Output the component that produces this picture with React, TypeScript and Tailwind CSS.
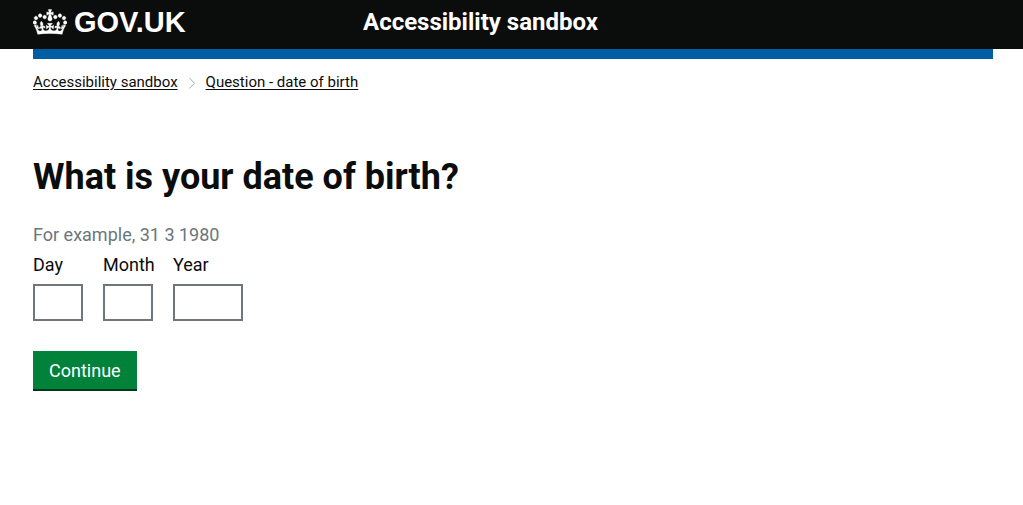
const crown =
  'M25 30.2c3.5 1.5 7.7-.2 9.1-3.7 1.5-3.6-.2-7.8-3.9-9.2-3.6-1.4-7.6.3-9.1 3.9-1.4 3.5.3 7.5 3.9 9zM9 39.5c3.6 1.5 7.8-.2 9.2-3.7 1.5-3.6-.2-7.8-3.9-9.1-3.6-1.5-7.6.2-9.1 3.8-1.4 3.5.3 7.5 3.8 9zM4.4 57.2c3.5 1.5 7.7-.2 9.1-3.8 1.5-3.6-.2-7.7-3.9-9.1-3.5-1.5-7.6.3-9.1 3.8-1.4 3.5.3 7.6 3.9 9.1zm38.3-21.4c3.5 1.5 7.7-.2 9.1-3.8 1.5-3.6-.2-7.7-3.9-9.1-3.6-1.5-7.6.3-9.1 3.8-1.3 3.6.4 7.7 3.9 9.1zm64.4-5.6c-3.6 1.5-7.8-.2-9.1-3.7-1.5-3.6.2-7.8 3.8-9.2 3.6-1.4 7.7.3 9.2 3.9 1.3 3.5-.4 7.5-3.9 9zm15.9 9.3c-3.6 1.5-7.7-.2-9.1-3.7-1.5-3.6.2-7.8 3.7-9.1 3.6-1.5 7.7.2 9.2 3.8 1.5 3.5-.3 7.5-3.8 9zm4.7 17.7c-3.6 1.5-7.8-.2-9.2-3.8-1.5-3.6.2-7.7 3.9-9.1 3.6-1.5 7.7.3 9.2 3.8 1.3 3.5-.4 7.6-3.9 9.1zM89.3 35.8c-3.6 1.5-7.8-.2-9.2-3.8-1.4-3.6.2-7.7 3.9-9.1 3.6-1.5 7.7.3 9.2 3.8 1.4 3.6-.3 7.7-3.9 9.1zM69.7 17.7l8.9 4.7V9.3l-8.9 2.8c-.2-.3-.5-.6-.9-.9L72.4 0H59.6l3.5 11.2c-.3.3-.6.5-.9.9l-8.8-2.8v13.1l8.8-4.7c.3.3.6.7.9.9l-5 15.4v.1c-.2.8-.4 1.6-.4 2.4 0 4.1 3.1 7.5 7 8.1h.2c.3 0 .7.1 1 .1.4 0 .7 0 1-.1h.2c4-.6 7.1-4.1 7.1-8.1 0-.8-.1-1.7-.4-2.4V34l-5.1-15.4c.4-.2.7-.6 1-.9zM66 92.8c16.9 0 32.8 1.1 47.1 3.2 4-16.9 8.9-26.7 14-33.5l-9.6-3.4c1 4.9 1.1 7.2 0 10.2-1.5-1.4-3-4.3-4.2-8.7L108.6 76c2.8-2 5-3.2 7.5-3.3-4.4 9.4-10 11.9-13.6 11.2-4.3-.8-6.3-4.6-5.6-7.9 1-4.7 5.7-5.9 8-.5 4.3-8.7-3-11.4-7.6-8.8 7.1-7.2 7.9-13.5 2.1-21.1-8 6.1-8.1 12.3-4.5 20.8-4.7-5.4-12.1-2.5-9.5 6.2 3.4-5.2 7.9-2 7.2 3.1-.6 4.3-6.4 7.8-13.5 7.2-10.3-.9-10.9-8-11.2-13.8 2.5-.5 7.1 1.8 11 7.3L80.2 60c-4.1 4.4-8 5.3-12.3 5.4 1.4-4.4 8-11.6 8-11.6H55.5s6.4 7.2 7.9 11.6c-4.2-.1-8-1-12.3-5.4l1.4 16.4c3.9-5.5 8.5-7.7 10.9-7.3-.3 5.8-.9 12.8-11.1 13.8-7.2.6-12.9-2.9-13.5-7.2-.7-5 3.8-8.3 7.1-3.1 2.7-8.7-4.6-11.6-9.4-6.2 3.7-8.5 3.6-14.7-4.6-20.8-5.8 7.6-5 13.9 2.2 21.1-4.7-2.6-11.9.1-7.7 8.8 2.3-5.5 7.1-4.2 8.1.5.7 3.3-1.3 7.1-5.7 7.9-3.5.7-9-1.8-13.5-11.2 2.5.1 4.7 1.3 7.5 3.3l-4.7-15.4c-1.2 4.4-2.7 7.2-4.3 8.7-1.1-3-.9-5.3 0-10.2l-9.5 3.4c5 6.9 9.9 16.7 14 33.5 14.8-2.1 30.8-3.2 47.7-3.2z';

const fields = [
  { id: 'dob-day', label: 'Day', width: 'w-[50px]', max: 2 },
  { id: 'dob-month', label: 'Month', width: 'w-[50px]', max: 2 },
  { id: 'dob-year', label: 'Year', width: 'w-[70px]', max: 4 },
];

function Header() {
  return (
    <header className="bg-[#0b0c0c] pr-[30px] pl-[33px] text-white">
      <div className="grid grid-cols-[330px_1fr] items-center pt-1 pb-[9px]">
        <a href="#" className="flex items-center gap-[7px]">
          <svg
            viewBox="0 0 132 97"
            className="h-[26px] w-[34px]"
            fill="currentColor"
            stroke="currentColor"
            strokeWidth="1.5"
            aria-hidden="true"
          >
            <path d={crown} />
          </svg>
          <span className="font-['Liberation_Sans',sans-serif] text-[29px] leading-9 font-bold">GOV.UK</span>
        </a>
        <a href="#" className="text-2xl leading-9 font-bold">Accessibility sandbox</a>
      </div>
    </header>
  );
}

export default function App() {
  return (
    <div className="bg-white font-[Roboto,sans-serif] text-[#0b0c0c]">
      <Header />
      <div className="pr-[30px] pl-[33px]">
        <div className="h-[10px] bg-[#005ea5]" />
        <nav aria-label="Breadcrumb" className="pt-3">
          <ol className="flex items-center gap-[10px] text-[15px] leading-[22px]">
            <li><a href="#" className="underline underline-offset-2">Accessibility sandbox</a></li>
            <li aria-hidden="true" className="pt-[2px]">
              <svg viewBox="0 0 8 12" className="h-3 w-2" fill="none" stroke="#a5a9ab">
                <path d="M1.5 1 6.5 6.2 1.5 11.4" />
              </svg>
            </li>
            <li><a href="#" className="underline underline-offset-2">Question - date of birth</a></li>
          </ol>
        </nav>
        <main className="pt-16 pb-8">
          <form onSubmit={(e) => e.preventDefault()}>
            <fieldset aria-describedby="dob-hint">
              <legend>
                <h1 className="text-4xl leading-10 font-bold">What is your date of birth?</h1>
              </legend>
              <p id="dob-hint" className="pt-[25px] text-lg leading-[25px] text-[#6b767c]">
                For example, 31 3 1980
              </p>
              <div className="flex gap-5 pt-[5px]">
                {fields.map((f) => (
                  <div key={f.id} className={f.width}>
                    <label htmlFor={f.id} className="block pb-[7px] text-lg leading-[25px] whitespace-nowrap">
                      {f.label}
                    </label>
                    <input
                      id={f.id}
                      type="text"
                      inputMode="numeric"
                      maxLength={f.max}
                      className="block h-[37px] w-full border-2 border-[#6f777b] px-1 text-lg"
                    />
                  </div>
                ))}
              </div>
            </fieldset>
            <button
              type="submit"
              className="mt-[30px] h-10 border-b-2 border-[#003618] bg-[#00823b] px-4 pt-[2px] text-lg text-white"
            >
              Continue
            </button>
          </form>
        </main>
      </div>
    </div>
  );
}
